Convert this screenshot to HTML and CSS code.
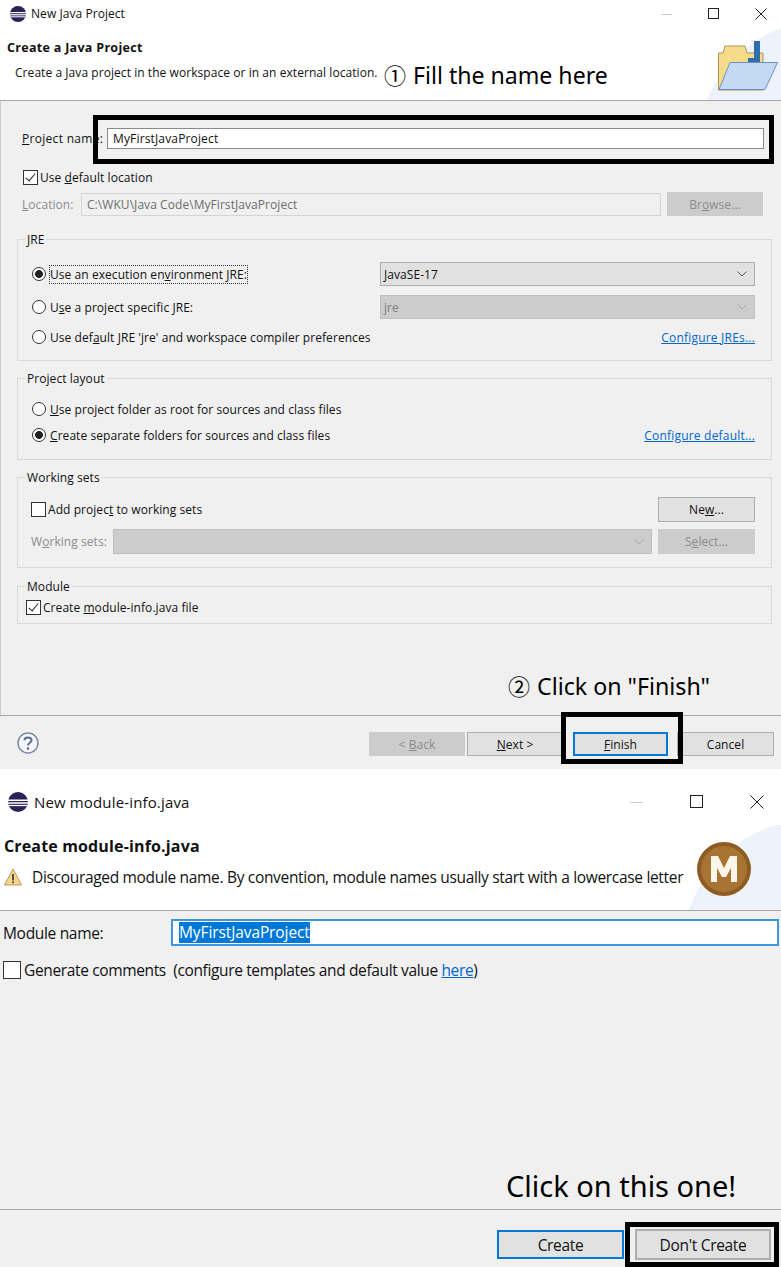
FILE: index.html
```html
<!DOCTYPE html>
<html>
<head>
<meta charset="utf-8">
<title>New Java Project</title>
<link rel="stylesheet" href="styles.css">
</head>
<body>
<div class="page">

  <!-- first dialog -->
  <div class="dialog first">
    <div class="titlebar">
      <svg class="eclipse" width="16" height="16" viewBox="0 0 16 16"><circle cx="8" cy="8" r="8" fill="#2c2255"/><rect x="0" y="6" width="16" height="1.2" fill="#fff"/><rect x="0" y="8.2" width="16" height="1.2" fill="#fff"/><rect x="0.5" y="10.3" width="15" height="1" fill="#fff"/></svg>
      <span class="title-text">New Java Project</span>
      <div class="winbtns">
        <svg width="12" height="12" viewBox="0 0 12 12"><path d="M0 6.5h11" stroke="#ccc" fill="none"/></svg>
        <svg width="12" height="12" viewBox="0 0 12 12"><rect x="0.5" y="0.5" width="10" height="10" stroke="#222" fill="none"/></svg>
        <svg width="12" height="12" viewBox="0 0 12 12"><path d="M0.5 0.5l11 11M11.5 0.5l-11 11" stroke="#222" fill="none"/></svg>
      </div>
    </div>
    <div class="header">
      <h1>Create a Java Project</h1>
      <p>Create a Java project in the workspace or in an external location.</p>
      <svg class="swoosh" width="74" height="72" viewBox="0 0 74 72"><path d="M74 0C42 12 14 38 0 72h74z" fill="#eef2fa"/></svg>
      <svg class="banner" width="60" height="50" viewBox="0 0 60 50">
        <path d="M0.5 49V12H5L7 5H27L29 12H45V49Z" fill="#f5dc8a" stroke="#a8955a"/>
        <path d="M36 0H42V22H30V17H36Z" fill="#2f6ea8"/>
        <path d="M1 48.5L12 21.5H59.5L47 48.5Z" fill="#c4d9f3" stroke="#6f8fc4"/>
      </svg>
    </div>

    <div class="body">
      <div class="name-row">
        <label class="name-label"><u>P</u>roject name:</label>
        <input class="text-input" value="MyFirstJavaProject">
      </div>
      <label class="check-row default-loc"><span class="box checked"></span><span>Use <u>d</u>efault location</span></label>
      <div class="loc-row">
        <span class="muted loc-label"><u>L</u>ocation:</span>
        <div class="loc-input">C:\WKU\Java Code\MyFirstJavaProject</div>
        <div class="btn disabled browse"><span>Br<u>o</u>wse...</span></div>
      </div>

      <fieldset class="group jre">
        <legend>JRE</legend>
        <div class="row r1">
          <span class="radio on"></span>
          <span class="focused">Use an execution en<u>v</u>ironment JRE:</span>
          <div class="combo">JavaSE-17<svg width="10" height="6" viewBox="0 0 10 6"><path d="M0.5 0.5L5 5l4.5-4.5" stroke="#555" fill="none"/></svg></div>
        </div>
        <div class="row r2">
          <span class="radio"></span>
          <span>U<u>s</u>e a project specific JRE:</span>
          <div class="combo off">jre<svg width="10" height="6" viewBox="0 0 10 6"><path d="M0.5 0.5L5 5l4.5-4.5" stroke="#aaa" fill="none"/></svg></div>
        </div>
        <div class="row r3">
          <span class="radio"></span>
          <span>Use def<u>a</u>ult JRE 'jre' and workspace compiler preferences</span>
          <a class="link">Configure JREs...</a>
        </div>
      </fieldset>

      <fieldset class="group layout">
        <legend>Project layout</legend>
        <div class="row r4">
          <span class="radio"></span>
          <span><u>U</u>se project folder as root for sources and class files</span>
        </div>
        <div class="row r5">
          <span class="radio on"></span>
          <span><u>C</u>reate separate folders for sources and class files</span>
          <a class="link">Configure default...</a>
        </div>
      </fieldset>

      <fieldset class="group working">
        <legend>Working sets</legend>
        <div class="row r6">
          <span class="box"></span>
          <span class="tight">Add projec<u>t</u> to working sets</span>
          <div class="btn side"><span>Ne<u>w</u>...</span></div>
        </div>
        <div class="row r7">
          <span class="muted ws-label">W<u>o</u>rking sets:</span>
          <div class="combo off wide"><svg width="10" height="6" viewBox="0 0 10 6"><path d="M0.5 0.5L5 5l4.5-4.5" stroke="#aaa" fill="none"/></svg></div>
          <div class="btn disabled side"><span>S<u>e</u>lect...</span></div>
        </div>
      </fieldset>

      <fieldset class="group module">
        <legend>Module</legend>
        <div class="row r8">
          <span class="box checked"></span>
          <span class="tight">Create <u>m</u>odule-info.java file</span>
        </div>
      </fieldset>
    </div>

    <div class="footer">
      <svg class="help" width="22" height="22" viewBox="0 0 22 22"><circle cx="11" cy="11" r="10" fill="#f4f6fa" stroke="#7e8ba8" stroke-width="1.5"/><path d="M7.5 8.2C7.5 4.5 14.5 4.5 14.5 8.2c0 2.6-3.5 2.6-3.5 5.3" stroke="#5f6d8c" stroke-width="2" fill="none"/><circle cx="11" cy="16.6" r="1.3" fill="#5f6d8c"/></svg>
      <div class="btn disabled back"><span>&lt; <u>B</u>ack</span></div>
      <div class="btn next"><span><u>N</u>ext &gt;</span></div>
      <div class="btn primary finish"><span><u>F</u>inish</span></div>
      <div class="btn cancel">Cancel</div>
    </div>
  </div>

  <!-- second dialog -->
  <div class="dialog second">
    <div class="titlebar">
      <svg class="eclipse" width="20" height="20" viewBox="0 0 16 16"><circle cx="8" cy="8" r="8" fill="#2c2255"/><rect x="0" y="6" width="16" height="1.2" fill="#fff"/><rect x="0" y="8.2" width="16" height="1.2" fill="#fff"/><rect x="0.5" y="10.3" width="15" height="1" fill="#fff"/></svg>
      <span class="title-text">New module-info.java</span>
      <div class="winbtns">
        <svg width="14" height="14" viewBox="0 0 14 14"><path d="M0 7.5h13" stroke="#ccc" fill="none"/></svg>
        <svg width="14" height="14" viewBox="0 0 14 14"><rect x="0.5" y="0.5" width="12" height="12" stroke="#222" fill="none"/></svg>
        <svg width="14" height="14" viewBox="0 0 14 14"><path d="M0.5 0.5l13 13M13.5 0.5l-13 13" stroke="#222" fill="none"/></svg>
      </div>
    </div>
    <div class="header">
      <h1>Create module-info.java</h1>
      <p>
        <svg class="warn" width="18" height="18" viewBox="0 0 18 18"><path d="M9 1L17.5 17H.5z" fill="#f7d58a" stroke="#b99a5c"/><rect x="8.2" y="6" width="1.6" height="6.5" fill="#333"/><rect x="8.2" y="13.5" width="1.6" height="1.7" fill="#333"/></svg>
        <span>Discouraged module name. By convention, module names usually start with a lowercase letter</span>
      </p>
      <svg class="swoosh" width="92" height="86" viewBox="0 0 92 86"><path d="M92 0C50 10 16 42 0 86h92z" fill="#eef2fa"/></svg>
      <svg class="banner" width="56" height="56" viewBox="0 0 56 56">
        <circle cx="28" cy="28" r="27" fill="#8e5c22"/>
        <circle cx="28" cy="28" r="23" fill="#a87434"/>
        <path d="M15 41V15h7l6 12 6-12h7v26h-6V27l-5 9h-4l-5-9v14z" fill="#fbf5ea"/>
      </svg>
    </div>

    <div class="body">
      <div class="module-row">
        <label class="module-label">Module name:</label>
        <div class="module-input"><span class="selected">MyFirstJavaProject</span></div>
      </div>
      <label class="gen-row"><span class="box big"></span><span>Generate comments&nbsp; (configure templates and default value <a class="link">here</a>)</span></label>
    </div>

    <div class="footer">
      <div class="btn primary create">Create</div>
      <div class="btn dont">Don't Create</div>
    </div>
  </div>

  <!-- annotations drawn over the dialogs -->
  <div class="mark mark-name"></div>
  <div class="mark mark-finish"></div>
  <div class="mark mark-dont"></div>
  <div class="note note-name"><span class="num">①</span>Fill the name here</div>
  <div class="note note-finish"><span class="num">②</span>Click on "Finish"</div>
  <div class="note note-dont">Click on this one!</div>
</div>
</body>
</html>
```

FILE: styles.css
```css
html, body{
	margin: 0;
	padding: 0;
}
body{
	background-color: #fff;
	color: #111;
	font-family: "Open Sans", "Noto Sans", sans-serif;
	font-size: 12px;
	letter-spacing: 0.06px;
}
.page{
	position: relative;
	width: 781px;
	height: 1267px;
	overflow: hidden;
}
.dialog{
	display: flex;
	flex-direction: column;
}
.first{ height: 769px; }
.second{ height: 498px; font-size: 15.5px; letter-spacing: -0.32px; }

/* title bar */
.titlebar{
	display: flex;
	align-items: center;
	background-color: #fff;
}
.first .titlebar{ height: 27px; padding-left: 10px; }
.second .titlebar{ height: 56px; padding: 10px 0 0 8px; box-sizing: border-box; }
.title-text{ margin-left: 5px; }
.second .title-text{ margin-left: 6px; font-size: 15px; letter-spacing: 0.15px; }
.winbtns{
	display: flex;
	margin-left: auto;
}
.first .winbtns{ gap: 35px; padding-right: 14px; }
.second .winbtns{ gap: 46px; padding-right: 17px; }

/* white header */
.header{
	position: relative;
	background-color: #fff;
	border-bottom: 1px solid #a8a8a8;
	overflow: hidden;
}
.first .header{ height: 73px; }
.second .header{ height: 85px; }
.header h1{
	margin: 0;
	font-size: 12.5px;
	font-weight: 700;
}
.first .header h1{ padding: 12px 0 0 7px; line-height: 17px; letter-spacing: 0.3px; }
.first .header p{ margin: 8px 0 0 15px; line-height: 17px; }
.second .header h1{ padding: 10px 0 0 4px; font-size: 16px; line-height: 22px; letter-spacing: 0.15px; }
.second .header p{
	display: flex;
	align-items: center;
	gap: 10px;
	margin: 9px 0 0 4px;
	line-height: 22px;
}
.swoosh{
	position: absolute;
	right: 0;
	bottom: 0;
}
.banner{
	position: absolute;
}
.first .banner{ left: 718px; top: 14px; }
.second .banner{ left: 696px; top: 16px; }

/* dialog body */
.body{
	flex: 1;
	background-color: #f0f0f0;
}
.first .body{ border-left: 1px solid #ccc; }
.name-row{
	display: flex;
	align-items: center;
	height: 21px;
	margin-top: 27px;
	padding-left: 21px;
}
.name-label{ width: 85px; flex: none; letter-spacing: 0.3px; white-space: nowrap; }
.text-input{
	width: 657px;
	height: 21px;
	box-sizing: border-box;
	border: 1px solid #8a8a8a;
	background-color: #fff;
	padding: 0 5px;
	font: inherit;
	letter-spacing: 0.15px;
	color: #111;
	outline: none;
}
.check-row{
	display: flex;
	align-items: center;
	gap: 2px;
}
.default-loc{
	height: 16px;
	margin-top: 20px;
	padding-left: 22px;
}
.loc-row{
	display: flex;
	align-items: center;
	height: 24px;
	margin-top: 7px;
	padding-left: 21px;
}
.muted{ color: #8c8c8c; }
.loc-label{ width: 59px; }
.loc-input{
	width: 580px;
	height: 23px;
	line-height: 21px;
	box-sizing: border-box;
	border: 1px solid #d4d4d4;
	padding-left: 5px;
	color: #6d6d6d;
}

/* small controls */
.box{
	flex: none;
	position: relative;
	width: 13px;
	height: 13px;
	border: 1px solid #333;
	background-color: #fff;
}
.box.checked::after{
	content: "";
	position: absolute;
	left: 4px;
	top: 0;
	width: 4px;
	height: 9px;
	border: solid #222;
	border-width: 0 1.5px 1.5px 0;
	transform: rotate(40deg);
}
.box.big{ width: 16px; height: 16px; }
.radio{
	flex: none;
	box-sizing: border-box;
	width: 14px;
	height: 14px;
	margin-right: 4px;
	border: 1px solid #333;
	border-radius: 50%;
	background-color: #fff;
}
.radio.on{
	background: radial-gradient(circle, #222 0, #222 3.6px, #fff 4.2px);
}
.focused{ outline: 1px dotted #333; }
.tight{ margin-left: 2px; }

.btn{
	flex: none;
	display: flex;
	align-items: center;
	justify-content: center;
	box-sizing: border-box;
	height: 24px;
	border: 1px solid #adadad;
	background-color: #e1e1e1;
}
.btn.disabled{
	background-color: #ccc;
	border-color: #ccc;
	color: #8c8c8c;
}
.btn.primary{
	border: 2px solid #0078d7;
}
.browse{ width: 96px; margin-left: 6px; }
.side{ width: 97px; margin-left: auto; height: 25px; }

.combo{
	display: flex;
	align-items: center;
	justify-content: space-between;
	box-sizing: border-box;
	width: 375px;
	height: 24px;
	margin-left: auto;
	padding: 0 7px 0 3px;
	background-color: #e1e1e1;
	border: 1px solid #adadad;
}
.combo.off{
	background-color: #ccc;
	border-color: #bfbfbf;
	color: #808080;
}
.combo.wide{
	width: 539px;
	height: 25px;
	margin-left: 5px;
	justify-content: flex-end;
}
.link{
	margin-left: auto;
	color: #0066cc;
	text-decoration: underline;
}
.first .link{ letter-spacing: 0.2px; }

/* group boxes */
.group{
	box-sizing: border-box;
	width: 755px;
	min-width: 0;
	margin: 0 0 0 16px;
	padding: 0 16px 0 14px;
	border: 1px solid #d9d9d9;
}
.group legend{
	margin-left: -7px;
	padding: 2px 2px 0;
	line-height: 16px;
}
.row{
	display: flex;
	align-items: center;
	height: 20px;
}
.jre{ margin-top: 14px; height: 131px; }
.r1{ height: 24px; margin-top: 14px; }
.r2{ height: 24px; margin-top: 9px; }
.r3{ margin-top: 8px; }
.layout{ margin-top: 8px; height: 91px; }
.r4{ margin-top: 12px; }
.r5{ margin-top: 6px; }
.working{ margin-top: 8px; height: 100px; }
.r6{ height: 25px; margin-top: 11px; }
.r6 .box{ margin-left: -1px; }
.r7{ height: 25px; margin-top: 7px; }
.ws-label{ width: 77px; margin-left: -1px; }
.module{ margin-top: 9px; height: 47px; padding-left: 8px; }
.module legend{ margin-left: -1px; }
.r8{ margin-top: 2px; }

/* button bars */
.footer{
	display: flex;
	background-color: #f0f0f0;
	border-top: 1px solid #a8a8a8;
	box-sizing: border-box;
}
.first .footer{ height: 54px; padding: 16px 0 0 17px; }
.help{ margin-right: 330px; }
.back{ width: 96px; }
.next{ width: 96px; margin-left: 2px; }
.finish{ width: 95px; margin-left: 10px; }
.cancel{ width: 97px; margin-left: 9px; }

.module-row{
	display: flex;
	align-items: center;
	height: 27px;
	margin-top: 8px;
	padding-left: 3px;
}
.module-label{ width: 168px; }
.module-input{
	flex: 1;
	height: 27px;
	line-height: 21px;
	margin-right: 2px;
	box-sizing: border-box;
	border: 2px solid #3d96e0;
	background-color: #fff;
	padding: 1px 0 0 6px;
}
.selected{
	display: inline-block;
	height: 21px;
	background-color: #0078d7;
	color: #fff;
	letter-spacing: -0.1px;
}
.gen-row{
	display: flex;
	align-items: center;
	gap: 3px;
	height: 20px;
	margin-top: 14px;
	padding-left: 3px;
}
.gen-row span:last-child{ letter-spacing: -0.36px; }
.second .footer{
	height: 58px;
	padding: 20px 0 0 497px;
}
.create{ width: 127px; height: 29px; }
.dont{
	width: 136px;
	height: 31px;
	margin: -1px 0 0 11px;
	border: 2px solid #adadad;
}

/* annotations */
.mark{
	position: absolute;
	box-sizing: border-box;
	border: 5px solid #000;
}
.mark-name{ left: 93px; top: 115px; width: 681px; height: 49px; }
.mark-finish{ left: 561px; top: 712px; width: 122px; height: 52px; }
.mark-dont{ left: 625px; top: 1222px; width: 154px; height: 45px; }
.note{
	position: absolute;
	color: #000;
	font-family: "Noto Sans", "Noto Sans CJK SC", sans-serif;
	white-space: nowrap;
	letter-spacing: 0;
}
.num{
	font-family: "Noto Sans CJK SC", sans-serif;
	font-size: 22px;
	margin-right: 7px;
}
.note-name{ left: 384px; top: 58px; font-size: 23.1px; line-height: 32px; }
.note-finish{ left: 508px; top: 669px; font-size: 23.2px; line-height: 32px; }
.note-dont{ left: 506px; top: 1166px; font-size: 29px; line-height: 40px; }
```
